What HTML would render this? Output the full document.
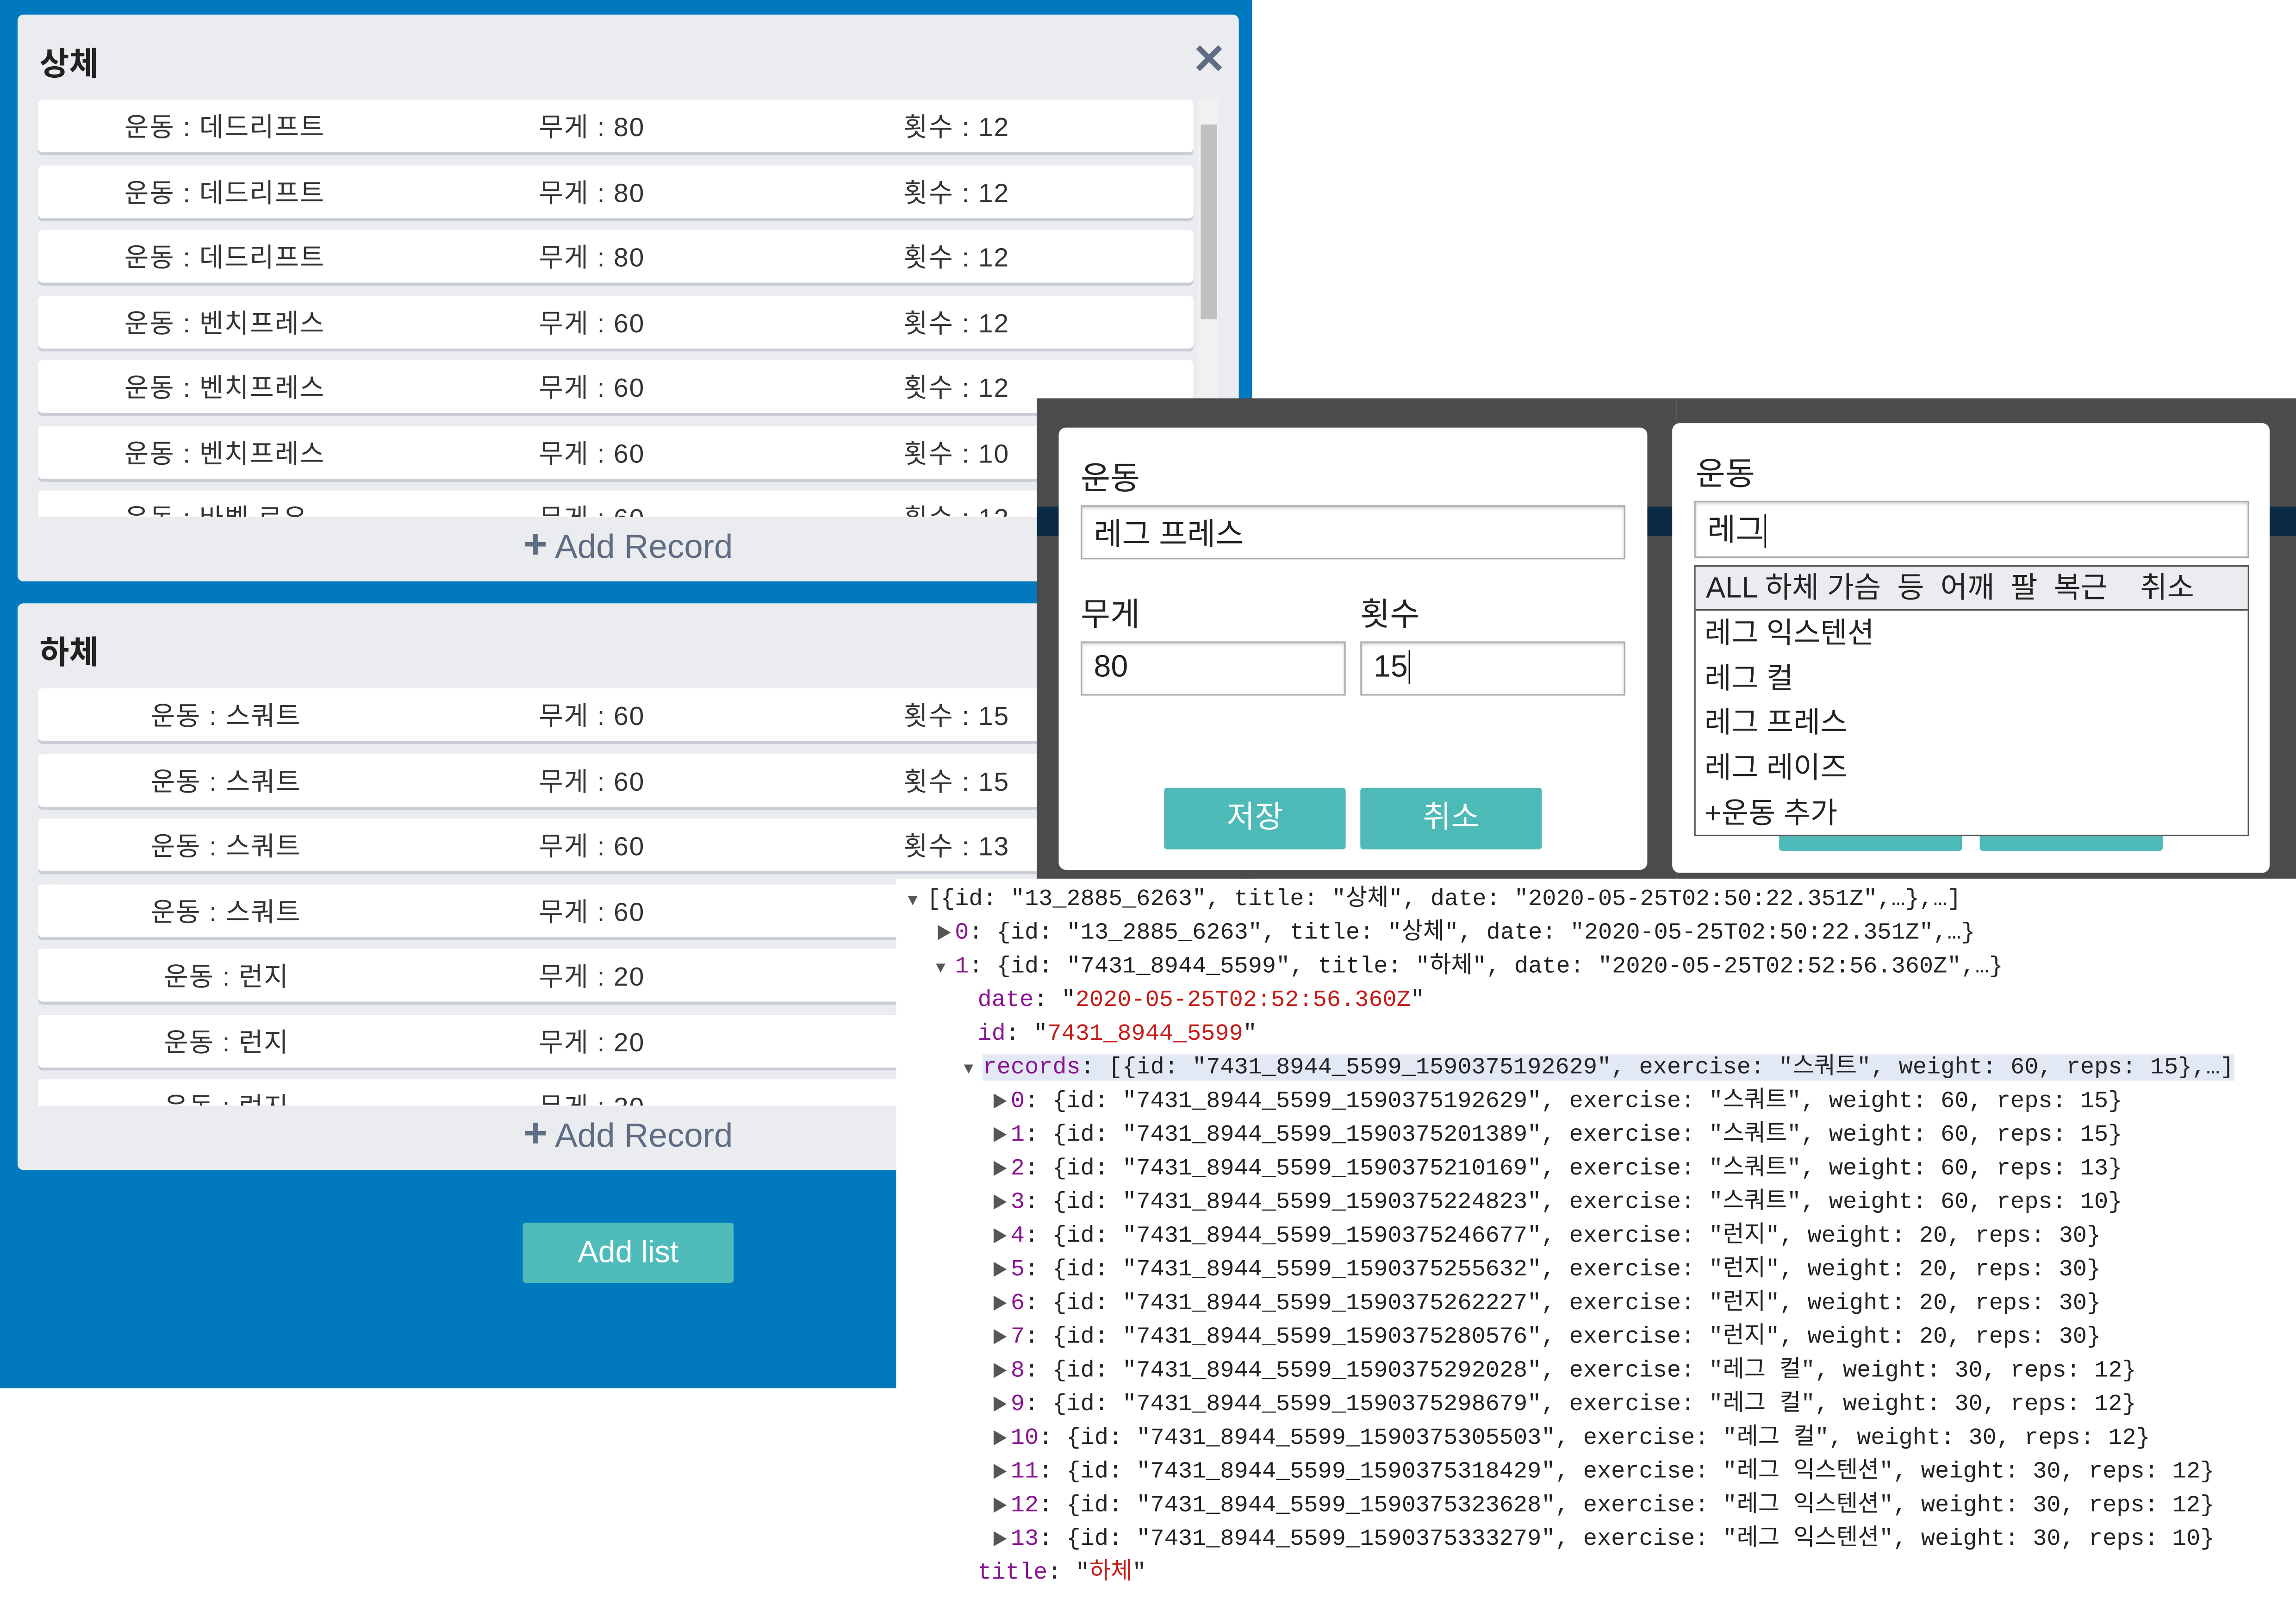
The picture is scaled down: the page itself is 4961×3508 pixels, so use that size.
<!DOCTYPE html>
<html><head><meta charset="utf-8">
<style>
html,body{margin:0;padding:0;background:#fff;width:4961px;height:3508px;overflow:hidden}
#w{position:absolute;left:0;top:0;width:1568px;height:1109px;transform:scale(3.1639,3.1632);transform-origin:0 0;font-family:"Liberation Sans","Noto Sans CJK KR",sans-serif;color:#333}
.a{position:absolute}
.panel{position:absolute;background:#ebecf0;border-radius:4px}
.title{position:absolute;left:15px;font-size:22px;font-weight:bold;color:#222}
.clip{position:absolute;left:14px;width:806px;overflow:hidden}
.row{position:absolute;left:0;width:789px;height:36px;background:#fff;border-radius:3px;box-shadow:0 2px 0 #c8ccd4;font-size:18px;color:#333;letter-spacing:0.6px}
.row span{position:absolute;top:5px}
.add{position:absolute;font-size:23px;color:#5e6c84;width:100%;text-align:center}
.inp{position:absolute;border:1px solid #aaa;box-shadow:inset 0 1px 2px #ccc;background:#fff;font-size:21px;color:#222;box-sizing:border-box;padding:3px 8px}
.btn{position:absolute;background:#4dbab8;color:#fff;font-size:21px;text-align:center;border-radius:2px}
.lbl{position:absolute;font-size:22px;color:#222}
.con{position:absolute;font-family:"Liberation Mono","Noto Sans CJK KR",monospace;font-size:15.9px;color:#222;white-space:normal}
.con div{height:23px;line-height:23px;overflow:visible;white-space:pre}
.k{color:#881391}.s{color:#c41a16}.t{color:#555;font-size:11px;display:inline-block;width:13px}
</style></head><body><div id="w">
<div class="a" style="left:0;top:0;width:855px;height:948px;background:#0079bf"></div>

<div class="panel" style="left:12px;top:10px;width:834px;height:387px">
 <div class="title" style="top:16px">상체</div>
 <div class="a" style="left:802px;top:14px;font-size:28px;font-weight:bold;color:#5e6c84">✕</div>
 <div class="clip" style="top:58px;height:285px">
  <div class="row" style="top:0"><span style="left:59px">운동 : 데드리프트</span><span style="left:342px">무게 : 80</span><span style="left:591px">횟수 : 12</span></div>
  <div class="row" style="top:44.5px"><span style="left:59px">운동 : 데드리프트</span><span style="left:342px">무게 : 80</span><span style="left:591px">횟수 : 12</span></div>
  <div class="row" style="top:89px"><span style="left:59px">운동 : 데드리프트</span><span style="left:342px">무게 : 80</span><span style="left:591px">횟수 : 12</span></div>
  <div class="row" style="top:133.5px"><span style="left:59px">운동 : 벤치프레스</span><span style="left:342px">무게 : 60</span><span style="left:591px">횟수 : 12</span></div>
  <div class="row" style="top:178px"><span style="left:59px">운동 : 벤치프레스</span><span style="left:342px">무게 : 60</span><span style="left:591px">횟수 : 12</span></div>
  <div class="row" style="top:222.5px"><span style="left:59px">운동 : 벤치프레스</span><span style="left:342px">무게 : 60</span><span style="left:591px">횟수 : 10</span></div>
  <div class="row" style="top:267px"><span style="left:59px">운동 : 바벨 로우</span><span style="left:342px">무게 : 60</span><span style="left:591px">횟수 : 12</span></div>
  <div class="a" style="left:792px;top:0;width:14px;height:285px;background:#f1f1f1"></div>
  <div class="a" style="left:794px;top:17px;width:11px;height:133px;background:#c1c1c1"></div>
 </div>
 <div class="add" style="top:350px"><b style="font-size:28px;line-height:20px">+</b> Add Record</div>
</div>

<div class="panel" style="left:12px;top:412px;width:834px;height:387px">
 <div class="title" style="top:16px">하체</div>
 <div class="clip" style="top:58px;height:285px">
  <div class="row" style="top:0"><span style="left:77px">운동 : 스쿼트</span><span style="left:342px">무게 : 60</span><span style="left:591px">횟수 : 15</span></div>
  <div class="row" style="top:44.5px"><span style="left:77px">운동 : 스쿼트</span><span style="left:342px">무게 : 60</span><span style="left:591px">횟수 : 15</span></div>
  <div class="row" style="top:89px"><span style="left:77px">운동 : 스쿼트</span><span style="left:342px">무게 : 60</span><span style="left:591px">횟수 : 13</span></div>
  <div class="row" style="top:133.5px"><span style="left:77px">운동 : 스쿼트</span><span style="left:342px">무게 : 60</span><span style="left:591px">횟수 : 10</span></div>
  <div class="row" style="top:178px"><span style="left:86px">운동 : 런지</span><span style="left:342px">무게 : 20</span><span style="left:591px">횟수 : 30</span></div>
  <div class="row" style="top:222.5px"><span style="left:86px">운동 : 런지</span><span style="left:342px">무게 : 20</span><span style="left:591px">횟수 : 30</span></div>
  <div class="row" style="top:267px"><span style="left:86px">운동 : 런지</span><span style="left:342px">무게 : 20</span><span style="left:591px">횟수 : 30</span></div>
 </div>
 <div class="add" style="top:350px"><b style="font-size:28px;line-height:20px">+</b> Add Record</div>
</div>

<div class="btn" style="left:357px;top:835px;width:144px;height:41px;line-height:41px;background:#4fbcbb">Add list</div>

<div class="a" style="left:612px;top:600px;width:956px;height:509px;background:#fff"></div>

<div class="a" style="left:708px;top:272px;width:437px;height:328px;background:#4b4b4b"></div>
<div class="a" style="left:708px;top:346px;width:437px;height:20px;background:#0d2a44"></div>
<div class="a" style="left:723px;top:292px;width:402px;height:302px;background:#fff;border-radius:5px"></div>
<div class="lbl" style="left:738px;top:309px">운동</div>
<div class="inp" style="left:738px;top:345px;width:372px;height:37px">레그 프레스</div>
<div class="lbl" style="left:738px;top:402px">무게</div>
<div class="lbl" style="left:929px;top:402px">횟수</div>
<div class="inp" style="left:738px;top:438px;width:181px;height:37px;padding-top:5px">80</div>
<div class="inp" style="left:929px;top:438px;width:181px;height:37px;padding-top:5px">15<span style="border-left:1px solid #000;margin-left:1px"></span></div>
<div class="btn" style="left:795px;top:538px;width:124px;height:42px;line-height:42px">저장</div>
<div class="btn" style="left:929px;top:538px;width:124px;height:42px;line-height:42px">취소</div>

<div class="a" style="left:1145px;top:272px;width:423px;height:328px;background:#4b4b4b"></div>
<div class="a" style="left:1145px;top:346px;width:423px;height:20px;background:#0d2a44"></div>
<div class="a" style="left:1142px;top:289px;width:408px;height:307px;background:#fff;border-radius:5px"></div>
<div class="lbl" style="left:1158px;top:306px">운동</div>
<div class="inp" style="left:1157px;top:342px;width:379px;height:39px">레그 <span style="border-left:1px solid #000"></span></div>
<div class="btn" style="left:1215px;top:560px;width:125px;height:21px"></div>
<div class="btn" style="left:1352px;top:560px;width:125px;height:21px"></div>
<div class="a" style="left:1157px;top:386px;width:379px;height:185px;background:#fff;border:1px solid #555;box-sizing:border-box"></div>
<div class="a" style="left:1158px;top:387px;width:377px;height:30px;background:#ebecf0;border-bottom:1px solid #555;font-size:20px;color:#222;line-height:30px;padding-left:7px;box-sizing:border-box;white-space:pre">ALL 하체 가슴  등  어깨  팔  복근    취소</div>
<div class="a" style="left:1164px;top:418px;font-size:20px;color:#222;line-height:30.7px">레그 익스텐션<br>레그 컬<br>레그 프레스<br>레그 레이즈<br>+운동 추가</div>

<div class="con" style="left:620px;top:603px"><div><span class="t">▼</span>[{id: "13_2885_6263", title: "상체", date: "2020-05-25T02:50:22.351Z",…},…]</div><div>  <span class="t">▶</span><span class="k">0</span>: {id: "13_2885_6263", title: "상체", date: "2020-05-25T02:50:22.351Z",…}</div><div>  <span class="t">▼</span><span class="k">1</span>: {id: "7431_8944_5599", title: "하체", date: "2020-05-25T02:52:56.360Z",…}</div><div>     <span class="k">date</span>: "<span class="s">2020-05-25T02:52:56.360Z</span>"</div><div>     <span class="k">id</span>: "<span class="s">7431_8944_5599</span>"</div><div>    <span class="t">▼</span><span style="background:#e2e9f4"><span class="k">records</span>: [{id: "7431_8944_5599_1590375192629", exercise: "스쿼트", weight: 60, reps: 15},…]</span></div><div>      <span class="t">▶</span><span class="k">0</span>: {id: "7431_8944_5599_1590375192629", exercise: "스쿼트", weight: 60, reps: 15}</div><div>      <span class="t">▶</span><span class="k">1</span>: {id: "7431_8944_5599_1590375201389", exercise: "스쿼트", weight: 60, reps: 15}</div><div>      <span class="t">▶</span><span class="k">2</span>: {id: "7431_8944_5599_1590375210169", exercise: "스쿼트", weight: 60, reps: 13}</div><div>      <span class="t">▶</span><span class="k">3</span>: {id: "7431_8944_5599_1590375224823", exercise: "스쿼트", weight: 60, reps: 10}</div><div>      <span class="t">▶</span><span class="k">4</span>: {id: "7431_8944_5599_1590375246677", exercise: "런지", weight: 20, reps: 30}</div><div>      <span class="t">▶</span><span class="k">5</span>: {id: "7431_8944_5599_1590375255632", exercise: "런지", weight: 20, reps: 30}</div><div>      <span class="t">▶</span><span class="k">6</span>: {id: "7431_8944_5599_1590375262227", exercise: "런지", weight: 20, reps: 30}</div><div>      <span class="t">▶</span><span class="k">7</span>: {id: "7431_8944_5599_1590375280576", exercise: "런지", weight: 20, reps: 30}</div><div>      <span class="t">▶</span><span class="k">8</span>: {id: "7431_8944_5599_1590375292028", exercise: "레그 컬", weight: 30, reps: 12}</div><div>      <span class="t">▶</span><span class="k">9</span>: {id: "7431_8944_5599_1590375298679", exercise: "레그 컬", weight: 30, reps: 12}</div><div>      <span class="t">▶</span><span class="k">10</span>: {id: "7431_8944_5599_1590375305503", exercise: "레그 컬", weight: 30, reps: 12}</div><div>      <span class="t">▶</span><span class="k">11</span>: {id: "7431_8944_5599_1590375318429", exercise: "레그 익스텐션", weight: 30, reps: 12}</div><div>      <span class="t">▶</span><span class="k">12</span>: {id: "7431_8944_5599_1590375323628", exercise: "레그 익스텐션", weight: 30, reps: 12}</div><div>      <span class="t">▶</span><span class="k">13</span>: {id: "7431_8944_5599_1590375333279", exercise: "레그 익스텐션", weight: 30, reps: 10}</div><div>     <span class="k">title</span>: "<span class="s">하체</span>"</div></div>
</div></body></html>
